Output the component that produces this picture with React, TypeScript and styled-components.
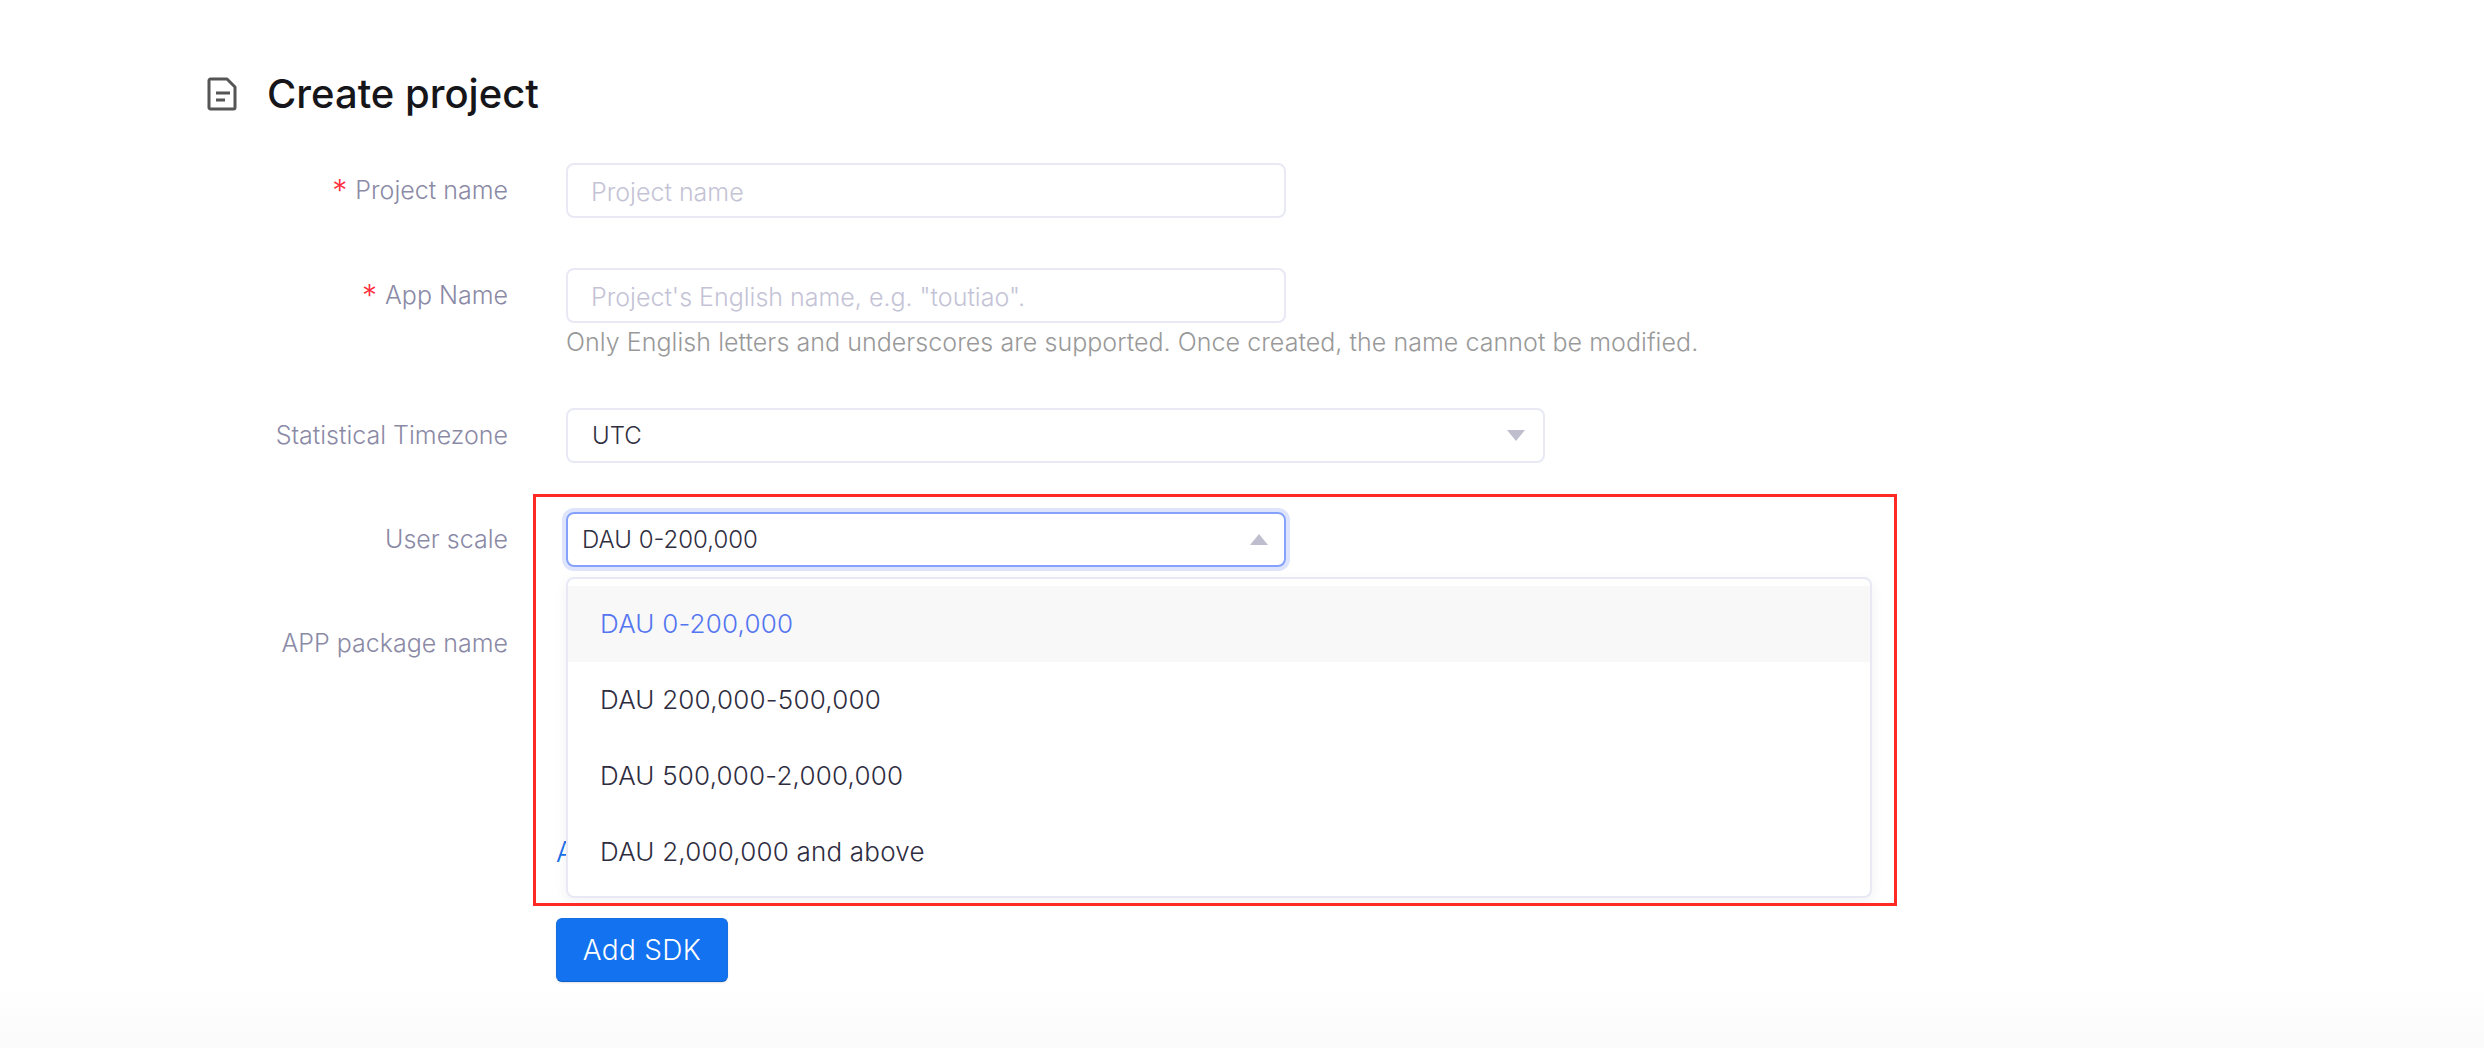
import React from 'react';
import styled, { createGlobalStyle } from 'styled-components';

const GlobalStyle = createGlobalStyle`
  html, body {
    margin: 0;
    padding: 0;
    background: #fff;
  }
  body {
    font-family: "Inter", "Liberation Sans", sans-serif;
  }
`;

const Page = styled.div`
  position: relative;
  width: 2484px;
  height: 1048px;
  overflow: hidden;
  padding: 70px 0 0 207px;
  box-sizing: border-box;
  background: linear-gradient(to bottom, #fff 0, #fff 990px, #fafafa 1048px);
`;

const Header = styled.div`
  display: flex;
  align-items: center;
  gap: 30px;
  height: 48px;
  margin-bottom: 45px;
`;

const Title = styled.h1`
  margin: 0;
  font-size: 40px;
  font-weight: 500;
  color: #16161a;
  line-height: 48px;
`;

const Row = styled.div<{ $mb: number }>`
  display: flex;
  align-items: flex-start;
  gap: 58px;
  margin-bottom: ${(p) => p.$mb}px;
`;

const Label = styled.label`
  width: 301px;
  height: 54px;
  display: flex;
  justify-content: flex-end;
  align-items: center;
  font-size: 25px;
  font-weight: 300;
  color: #8b8aa6;
  white-space: nowrap;
`;

const Star = styled.span`
  color: #ff2d3d;
  margin-right: 8px;
  font-size: 30px;
  line-height: 30px;
`;

const Field = styled.div``;

const Input = styled.div`
  box-sizing: border-box;
  width: 720px;
  height: 55px;
  border: 2px solid #e8e9f5;
  border-radius: 8px;
  padding: 2px 23px 0;
  display: flex;
  align-items: center;
  font-size: 25px;
  font-weight: 300;
  color: #c4c3d6;
`;

const Helper = styled.div`
  font-size: 25px;
  font-weight: 300;
  letter-spacing: 0.05px;
  line-height: 38px;
  color: #999;
  white-space: nowrap;
`;

const Select = styled.div<{ $open?: boolean; $wide?: boolean }>`
  box-sizing: border-box;
  width: ${(p) => (p.$wide ? 979 : 720)}px;
  height: 55px;
  border: 2px solid ${(p) => (p.$open ? '#85a1fb' : '#e8e9f5')};
  border-radius: 8px;
  padding: 0 ${(p) => (p.$open ? 16 : 18)}px 0 ${(p) => (p.$open ? 14 : 24)}px;
  display: flex;
  align-items: center;
  justify-content: space-between;
  font-size: 24px;
  font-weight: 300;
  color: #2f2e3f;
  box-shadow: ${(p) => (p.$open ? '0 0 0 4px #dde4fc' : 'none')};
`;

const Caret = styled.svg`
  width: 18px;
  height: 11px;
  fill: #bfbecf;
`;

const Actions = styled.div`
  margin-left: 349px;
  display: flex;
  flex-direction: column;
  align-items: flex-start;
`;

const AddLink = styled.a`
  font-size: 28px;
  font-weight: 300;
  color: #1a6fe8;
  line-height: 40px;
  margin-bottom: 46px;
`;

const AddButton = styled.button`
  box-sizing: border-box;
  width: 172px;
  height: 64px;
  border: 1px solid #1a6fe0;
  border-bottom-color: #0f5fc8;
  border-radius: 6px;
  background: #1272ef;
  color: #fff;
  font-family: inherit;
  font-size: 28px;
  font-weight: 300;
  letter-spacing: 0.3px;
  box-shadow: 0 1px 2px rgba(0, 0, 0, 0.12);
`;

const Dropdown = styled.ul`
  position: absolute;
  left: 566px;
  top: 577px;
  box-sizing: border-box;
  width: 1306px;
  height: 321px;
  margin: 0;
  padding: 7px 0 0;
  list-style: none;
  background: #fff;
  border: 2px solid #e8e9f5;
  border-radius: 8px;
  box-shadow: 0 4px 14px rgba(30, 30, 80, 0.06);
`;

const Option = styled.li<{ $active?: boolean }>`
  box-sizing: border-box;
  height: 76px;
  padding: 0 0 2px 32px;
  display: flex;
  align-items: center;
  font-size: 26px;
  font-weight: 300;
  letter-spacing: 0.2px;
  color: ${(p) => (p.$active ? '#5475f0' : '#2e2d3f')};
  background: ${(p) => (p.$active ? '#f8f8f8' : 'transparent')};
`;

const Highlight = styled.div`
  position: absolute;
  left: 533px;
  top: 494px;
  box-sizing: border-box;
  width: 1364px;
  height: 412px;
  border: 3px solid #ff2a23;
  pointer-events: none;
`;

const options = ['DAU 0-200,000', 'DAU 200,000-500,000', 'DAU 500,000-2,000,000', 'DAU 2,000,000 and above'];

const App = () => {
  return (
    <Page>
      <GlobalStyle />
      <Header>
        <svg width="30" height="34" viewBox="0 0 30 34" fill="none">
          <path d="M2 3.5C2 2.7 2.7 2 3.5 2H20L28 10V30.5C28 31.3 27.3 32 26.5 32H3.5C2.7 32 2 31.3 2 30.5V3.5Z" stroke="#555" strokeWidth="3" strokeLinejoin="round" />
          <path d="M9 16H23M9 23H18" stroke="#555" strokeWidth="3" />
        </svg>
        <Title>Create project</Title>
      </Header>
      <Row $mb={50}>
        <Label><Star>*</Star>Project name</Label>
        <Input>Project name</Input>
      </Row>
      <Row $mb={47}>
        <Label><Star>*</Star>App Name</Label>
        <Field>
          <Input>Project's English name, e.g. "toutiao".</Input>
          <Helper>Only English letters and underscores are supported. Once created, the name cannot be modified.</Helper>
        </Field>
      </Row>
      <Row $mb={49}>
        <Label>Statistical Timezone</Label>
        <Select $wide>
          UTC
          <Caret viewBox="0 0 18 11"><path d="M0 0H18L9 11Z" /></Caret>
        </Select>
      </Row>
      <Row $mb={49}>
        <Label>User scale</Label>
        <Select $open>
          DAU 0-200,000
          <Caret viewBox="0 0 18 11"><path d="M0 11H18L9 0Z" /></Caret>
        </Select>
      </Row>
      <Row $mb={162}>
        <Label>APP package name</Label>
      </Row>
      <Actions>
        <AddLink>A</AddLink>
        <AddButton>Add SDK</AddButton>
      </Actions>
      <Dropdown>
        {options.map((o, i) => (
          <Option key={o} $active={i === 0}>{o}</Option>
        ))}
      </Dropdown>
      <Highlight />
    </Page>
  );
};

export default App;
